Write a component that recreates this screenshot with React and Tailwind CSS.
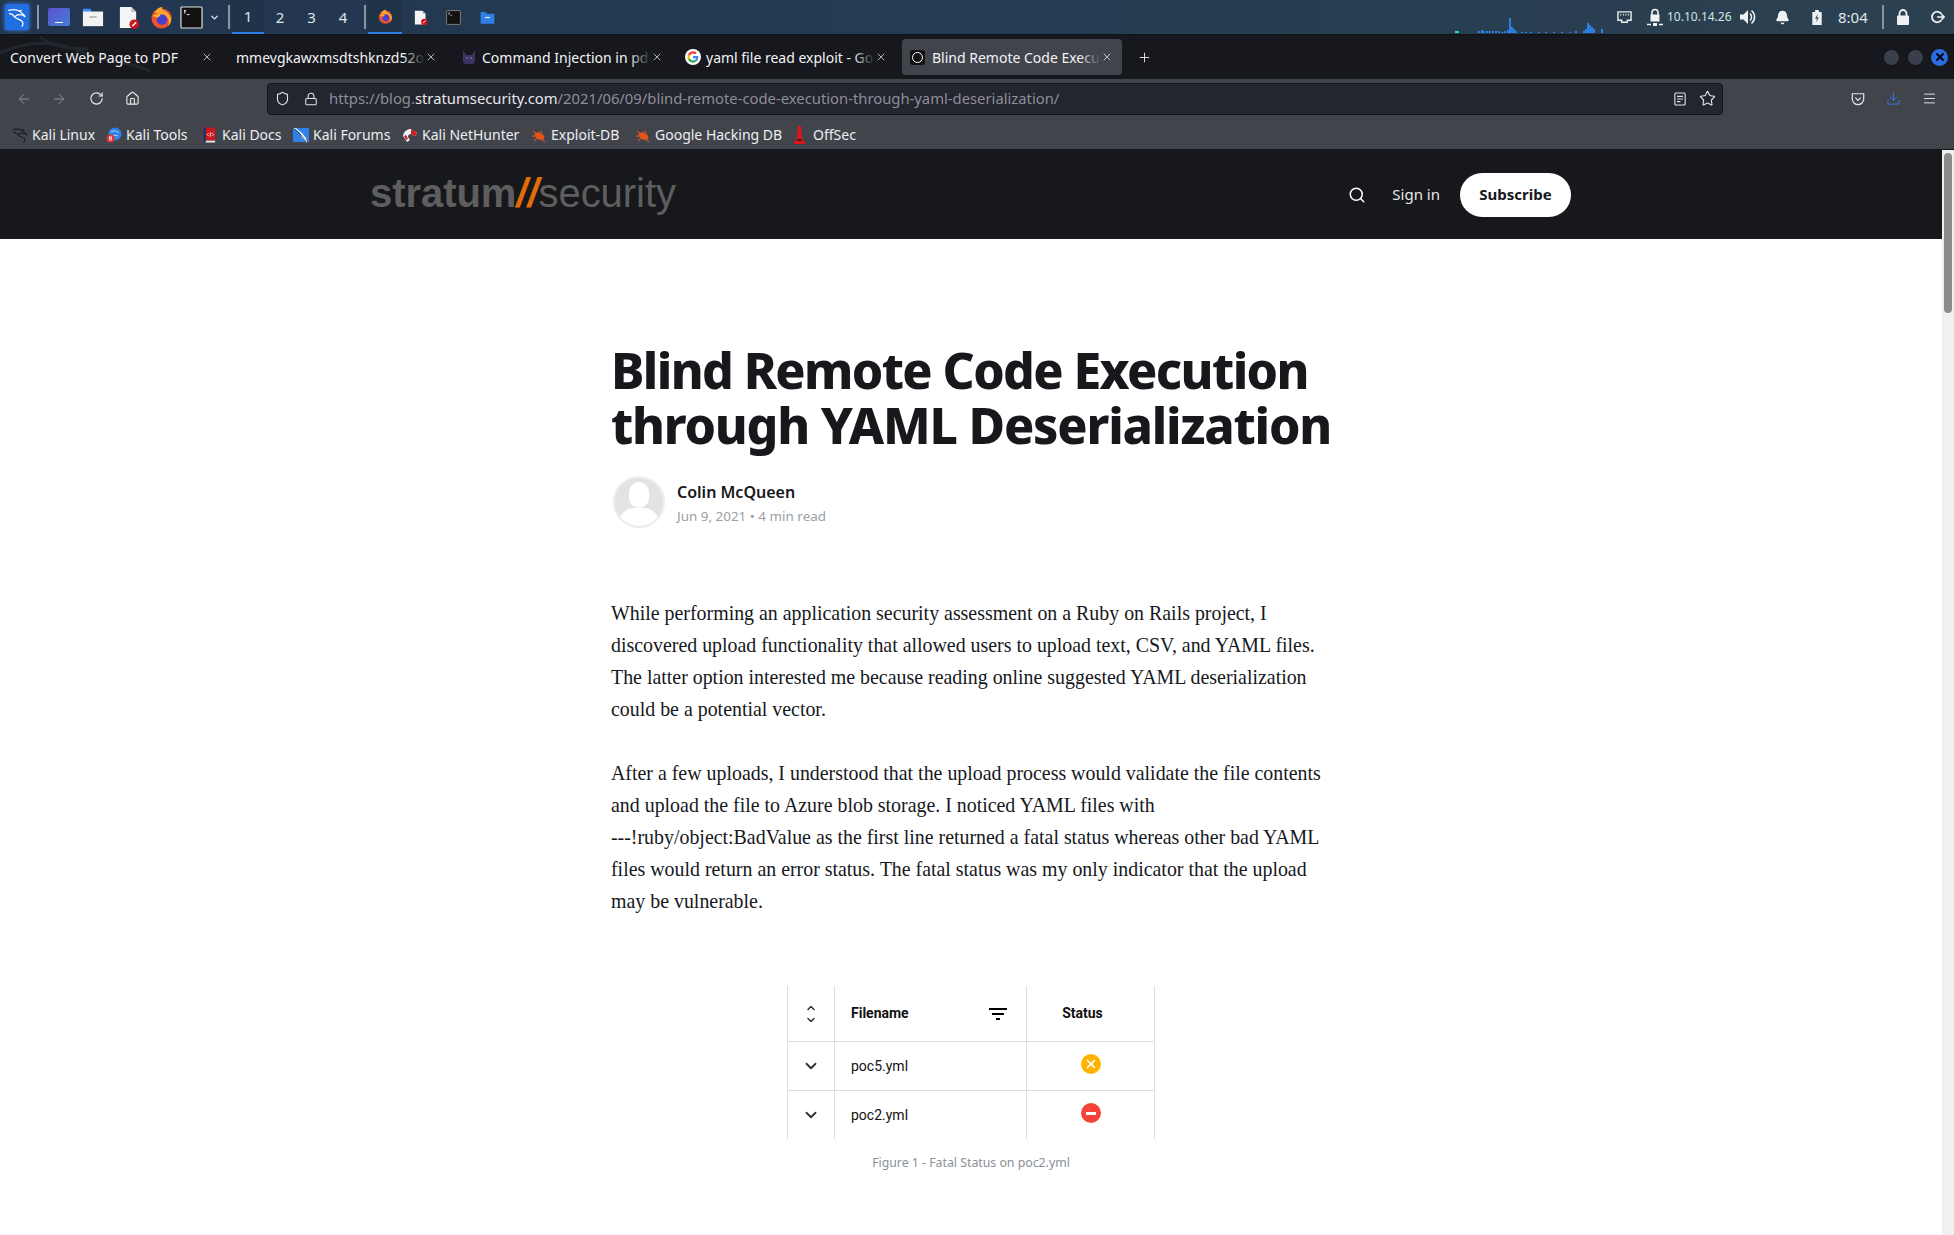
import { ChevronDown, Search, Lock, Shield, ArrowLeft, ArrowRight, RotateCw, Home, Star, Plus, X, Menu, Download, Bell } from "lucide-react";

const chrome = "[font-family:'Noto_Sans',sans-serif]";

function KaliLogo({ className, stroke = "#fff" }) {
  return (
    <svg viewBox="0 0 24 24" className={className} fill="none" stroke={stroke} strokeWidth="1.500" strokeLinecap="round">
      <path d="M2 4c5-1.500 10-1 13 1 3 2 5 3.500 7 7-2-2-4-3-6-3-3 0-6 1-6 3 0 3 8 2 9 7 .3 1.500 0 3-1 4" />
      <path d="M9 12c-1-2-3-4-6-4M15 5l2-1" />
    </svg>
  );
}

function Firefox({ className }) {
  return (
    <svg viewBox="0 0 24 24" className={className}>
      <circle cx="12" cy="13" r="10.500" fill="#f0532c" />
      <path d="M5 6c2-3 5-5 8-5-1 2 0 3 2 4 4 2 6 5 7 8 .5 3-1 6-3 8 2-6-1-11-7-11-2 0-3-1-3-2-2 0-3-1-4-2z" fill="#ffa42c" />
      <circle cx="12.500" cy="14" r="5.500" fill="#4a3fd0" />
      <path d="M3 10c3-2 6-2 8 0l-3 2c-2 0-4-1-5-2z" fill="#ffb52c" />
    </svg>
  );
}

function PdfDoc({ className }) {
  return (
    <svg viewBox="0 0 24 24" className={className}>
      <path d="M3 1h12l5 5v17H3z" fill="#f5f5f5" />
      <path d="M15 1l5 5h-5z" fill="#bbb" />
      <circle cx="18" cy="19" r="5" fill="#d0131c" />
      <path d="M16 21l4-4" stroke="#fff" strokeWidth="1.500" />
    </svg>
  );
}

function Terminal({ className, border = "#e5e5e5" }) {
  return (
    <svg viewBox="0 0 24 24" className={className}>
      <rect x="1" y="1" width="22" height="22" fill="#111" stroke={border} strokeWidth="1.200" rx="1" />
      <path d="M4 5h2.500M5 4v4M7 9h3" stroke="#eee" strokeWidth="1" fill="none" />
    </svg>
  );
}

function FolderIcon({ className, tab = "#3f8cf5", body = "#f2f2f2", slot = "#bbb" }) {
  return (
    <svg viewBox="0 0 24 24" className={className}>
      <path d="M1 7V3h8l2 3z" fill={tab} />
      <rect x="1" y="6" width="22" height="16" fill={body} />
      <rect x="8" y="11" width="8" height="2" fill={slot} />
    </svg>
  );
}

function Google({ className }) {
  return (
    <svg viewBox="0 0 24 24" className={className}>
      <circle cx="12" cy="12" r="12" fill="#fff" />
      <path d="M20 12.300c0-.6-.1-1.200-.2-1.700H12v3.200h4.500c-.2 1-.8 1.900-1.700 2.500l2.700 2.100c1.600-1.500 2.500-3.600 2.500-6.100z" fill="#4285f4" />
      <path d="M12 20.500c2.300 0 4.200-.8 5.500-2.100l-2.700-2.100c-.7.500-1.700.8-2.800.8-2.200 0-4-1.500-4.700-3.500l-2.800 2.200c1.400 2.800 4.300 4.700 7.500 4.700z" fill="#34a853" />
      <path d="M7.300 13.600c-.4-1.100-.4-2.200 0-3.300L4.500 8.100c-1.200 2.300-1.200 5.100 0 7.500z" fill="#fbbc05" />
      <path d="M12 6.900c1.200 0 2.300.4 3.200 1.200l2.400-2.400C16.100 4.300 14.100 3.500 12 3.500c-3.200 0-6.100 1.900-7.500 4.600l2.800 2.200C8 8.400 9.800 6.900 12 6.900z" fill="#ea4335" />
    </svg>
  );
}

function Bug({ className }) {
  return (
    <svg viewBox="0 0 14 14" className={className}>
      <ellipse cx="7.500" cy="8" rx="4.500" ry="3" fill="#e0561a" transform="rotate(30 7.500 8)" />
      <path d="M2 4l3 2M1 8h3M3 12l2-2M9 3l0 2M12 13l-2-2" stroke="#e0561a" strokeWidth="1" />
    </svg>
  );
}

function KaliToolsIcon({ className }) {
  return (
    <svg viewBox="0 0 16 16" className={className}>
      <circle cx="9" cy="7" r="6.500" fill="#2f80e8" />
      <path d="M5 5c3-2 6-1 8 1M6 9c2-1 4-1 6 0" stroke="#bcd8f8" strokeWidth="1" fill="none" />
      <circle cx="4.500" cy="11.500" r="4" fill="#e0342c" />
      <path d="M3 10h3M3.700 10v3.500M5.300 10v3.500" stroke="#fff" strokeWidth=".9" />
    </svg>
  );
}

function KaliDocsIcon({ className }) {
  return (
    <svg viewBox="0 0 16 16" className={className}>
      <rect x="2" y="0" width="12" height="14" fill="#c8161c" />
      <rect x="2" y="0" width="2" height="16" fill="#14306e" />
      <rect x="4" y="14" width="10" height="2" fill="#e8e8e8" />
      <path d="M7 6l-1.500 1.500L7 9M11 6l1.500 1.500L11 9M9.500 5l-1 5" stroke="#fff" strokeWidth=".9" fill="none" />
    </svg>
  );
}

function KaliForumsIcon({ className }) {
  return (
    <svg viewBox="0 0 16 16" className={className}>
      <rect x="0" y="1" width="16" height="14" rx="1" fill="#2f80e8" />
      <path d="M1 1l6 5 2 5 5 5-1-5-4-5-6-5z" fill="#f2f2f2" />
      <path d="M2 2l6 6 5 7" stroke="#222" strokeWidth=".7" fill="none" />
    </svg>
  );
}

function NetHunterIcon({ className }) {
  return (
    <svg viewBox="0 0 16 16" className={className}>
      <path d="M1 9c1-5 4-7 8-7l6 4-2 3-4-2c-2 0-3 1-3 3l2 3-3 2z" fill="#f2f2f2" />
      <path d="M9 2l6 4-2 3-4-2z" fill="#d8161c" />
      <path d="M4 13L2 9l2-1 2 4z" fill="#d8161c" />
    </svg>
  );
}

function OffSecIcon({ className }) {
  return (
    <svg viewBox="0 0 12 18" className={className}>
      <path d="M4.500 0h3l1 12 3 4v2H.5v-2l3-4z" fill="#d8161c" />
      <rect x="4" y="13" width="4" height="2" fill="#222" />
    </svg>
  );
}

function Spark() {
  // cpu graph in the panel
  const bars = [[0, 2, "#2ad4c0"], [2, 2, "#2ad4c0"], [23, 2], [26, 3], [28, 2], [31, 2], [34, 2], [37, 2], [40, 2], [43, 2], [46, 1], [49, 2], [52, 3], [54, 15], [56, 6], [58, 4], [60, 2], [66, 1], [70, 1], [75, 1], [83, 1], [90, 1], [98, 1], [106, 1], [114, 1], [120, 2], [128, 2], [130, 4], [132, 10], [134, 8], [136, 6], [138, 4], [146, 4]];
  return (
    <div className="relative h-[33px] w-[160px] self-start">
      {bars.map(([x, h, c], i) => (
        <span key={i} className="absolute bottom-0 w-[2px]" style={{ left: x, height: h, background: c || "#2a7ee6" }} />
      ))}
    </div>
  );
}

function TopPanel() {
  return (
    <div className={`h-[34px] flex items-center bg-gradient-to-r from-[#22364f] via-[#243c52] to-[#2c4150] text-[#dfe6ec] ${chrome}`}>
      <div className="ml-[5px] w-6 h-[26px] rounded-[2px] bg-[#1f6fe0] shadow-[0_0_4px_#3b82f6] flex items-center justify-center">
        <KaliLogo className="w-5 h-5" />
      </div>
      <div className="ml-[8px] w-[2px] h-[24px] bg-[#8b95a0]" />
      <div className="ml-[9px] w-[22px] h-[18px] rounded-[2px] bg-gradient-to-br from-[#5a4fd0] to-[#3f7fd6] flex items-end justify-center pb-[3px]">
        <span className="w-2 h-[1px] bg-white" />
      </div>
      <FolderIcon className="ml-[12px] w-[22px] h-[22px]" />
      <PdfDoc className="ml-[13px] w-[23px] h-[23px]" />
      <Firefox className="ml-[10px] w-[23px] h-[23px]" />
      <Terminal className="ml-[7px] w-[23px] h-[23px]" />
      <ChevronDown className="ml-[6px] w-[11px] h-[11px] text-[#dfe6ec]" strokeWidth={3} />
      <div className="ml-[8px] w-[2px] h-[24px] bg-[#8b95a0]" />
      <div className="ml-[2px] flex self-stretch text-[15px]">
        <div className="w-[32px] bg-[#1f3349] border-b-2 border-[#2f7fe8] flex items-center justify-center">1</div>
        <div className="w-[32px] flex items-center justify-center">2</div>
        <div className="w-[31px] flex items-center justify-center">3</div>
        <div className="w-[32px] flex items-center justify-center">4</div>
      </div>
      <div className="ml-[5px] w-[2px] h-[24px] bg-[#8b95a0]" />
      <div className="ml-[2px] w-[34px] self-stretch bg-[#1f3349] border-b-2 border-[#2f7fe8] flex items-center justify-center">
        <Firefox className="w-[15px] h-[15px]" />
      </div>
      <PdfDoc className="ml-[11px] w-[15px] h-[15px]" />
      <Terminal className="ml-[18px] w-[15px] h-[15px]" border="#999" />
      <FolderIcon className="ml-[19px] w-[15px] h-[15px]" tab="#2f7fe8" body="#2f7fe8" slot="#dbe8fb" />
      <div className="ml-[960px] self-start">
        <Spark />
      </div>
      <svg viewBox="0 0 16 16" className="ml-[2px] w-[15px] h-[15px]" fill="none" stroke="#e8edf0" strokeWidth="1.500">
        <path d="M1 2h14v9h-4v2H5v-2H1z" />
        <path d="M4 4v2M7 4v2M9.500 4v2M12 4v2" strokeWidth="1" />
      </svg>
      <svg viewBox="0 0 16 18" className="ml-[15px] w-[16px] h-[18px]">
        <path d="M5 7V4.500a3 3 0 0 1 6 0V7" fill="none" stroke="#eef2f4" strokeWidth="1.600" />
        <rect x="3.500" y="6.500" width="9" height="7" fill="#eef2f4" />
        <rect x="6" y="15" width="4" height="3" fill="#eef2f4" />
        <path d="M0 16.500h4M12 16.500h4" stroke="#eef2f4" strokeWidth="1.400" />
      </svg>
      <span className="ml-[4px] text-[12px] text-[#cfe6e0] w-[67px] whitespace-nowrap">10.10.14.26</span>
      <svg viewBox="0 0 18 18" className="ml-[5px] w-[18px] h-[18px]">
        <path d="M1 6.500h3.500L9 2v14l-4.500-4.500H1z" fill="#eef2f4" />
        <path d="M11 5.500a5 5 0 0 1 0 7M12.500 2.500a8.500 8.500 0 0 1 0 13" fill="none" stroke="#eef2f4" strokeWidth="1.600" />
      </svg>
      <Bell className="ml-[18px] w-[15px] h-[15px] text-[#eef2f4] fill-[#eef2f4]" />
      <svg viewBox="0 0 10 16" className="ml-[22px] w-[10px] h-[15px]">
        <path d="M3 0h4v2h3v14H0V2h3z" fill="#eef2f4" />
        <path d="M6 4L3 9h2l-1 4 3-5H5z" fill="#2c4150" />
      </svg>
      <span className="ml-[16px] text-[15px] text-[#dfe6ec] w-[32px]">8:04</span>
      <div className="ml-[12px] w-[2px] h-[24px] bg-[#8b95a0]" />
      <svg viewBox="0 0 14 16" className="ml-[12px] w-[14px] h-[16px]">
        <path d="M3.500 7V4.500a3.500 3.500 0 0 1 7 0V7" fill="none" stroke="#eef2f4" strokeWidth="1.800" />
        <rect x="1" y="6.500" width="12" height="9.500" rx="1" fill="#eef2f4" />
      </svg>
      <svg viewBox="0 0 16 16" className="ml-[21px] w-[14px] h-[14px]" fill="none" stroke="#eef2f4" strokeWidth="2">
        <path d="M12 4.500a6 6 0 1 0 0 7" />
        <path d="M7 8h8M12 5l3 3-3 3" strokeWidth="1.800" />
      </svg>
    </div>
  );
}

function Tab({ width, icon, title, active, fade, closeClass }) {
  return (
    <div className={`relative h-[36px] flex items-center shrink-0 rounded-[4px] ${active ? "bg-[#42444c]" : ""}`} style={{ width }}>
      {icon}
      <span className="overflow-hidden whitespace-nowrap text-[14px] text-[#f2f3f5] flex-1">{title}</span>
      {fade && <span className={`absolute top-0 bottom-0 w-[22px] bg-gradient-to-r from-transparent ${active ? "right-[21px] to-[#42444c]" : "right-[15px] to-[#16181d]"}`} />}
      <X className={`relative w-[12px] h-[12px] text-[#e8e8ea] shrink-0 ${closeClass}`} strokeWidth={1.5} />
    </div>
  );
}

function TabBar() {
  return (
    <div className={`relative h-[45px] bg-[#16181d] border-t border-[#101216] flex items-center overflow-hidden ${chrome}`}>
      <svg viewBox="0 0 170 44" className="absolute left-0 top-0 w-[170px] h-[44px]" fill="none" stroke="#23262c" strokeWidth="3">
        <path d="M0 18c30-14 60-12 84 0 22 10 40 6 66 18" />
        <path d="M40 2c10 8 26 12 48 12" />
      </svg>
      <div className="relative ml-[10px] flex items-center">
        <Tab width={206} title="Convert Web Page to PDF" closeClass="mr-[3px]" />
        <div className="w-[20px]" />
        <Tab width={204} title="mmevgkawxmsdtshknzd52ocdvnj" fade closeClass="mr-[3px]" />
        <div className="w-[21px]" />
        <Tab
          width={205}
          icon={
            <svg viewBox="0 0 16 16" className="w-[16px] h-[16px] mr-[5px] shrink-0">
              <path d="M2 1l3 5h6l3-5v12l-2 2H4l-2-2z" fill="#3a3560" />
              <path d="M5 9h2M9 9h2" stroke="#8a84c0" strokeWidth="1" />
            </svg>
          }
          title="Command Injection in pdf"
          fade
          closeClass="mr-[3px]"
        />
        <div className="w-[19px]" />
        <Tab width={205} icon={<Google className="w-[16px] h-[16px] mr-[5px] shrink-0" />} title="yaml file read exploit - Google" fade closeClass="mr-[3px]" />
        <div className="w-[12px]" />
        <Tab
          width={220}
          active
          icon={<span className="ml-[8px] mr-[7px] w-[15px] h-[15px] rounded-[3px] bg-[#111] flex items-center justify-center shrink-0"><span className="w-[11px] h-[11px] rounded-full border-[1.500px] border-white" /></span>}
          title="Blind Remote Code Execution"
          fade
          closeClass="mr-[9px]"
        />
      </div>
      <Plus className="ml-[15px] w-[15px] h-[15px] text-[#e8e8ea]" strokeWidth={1.5} />
      <div className="ml-auto mr-[6px] flex items-center gap-[7px]">
        <span className="w-[17px] h-[17px] rounded-full bg-[#3a3f4c] border border-[#101216]" />
        <span className="w-[17px] h-[17px] rounded-full bg-[#3a3f4c] border border-[#101216]" />
        <span className="w-[17px] h-[17px] rounded-full bg-[#2a6de0] flex items-center justify-center">
          <X className="w-[12px] h-[12px] text-[#05070d]" strokeWidth={4} />
        </span>
      </div>
    </div>
  );
}

function UrlBar() {
  return (
    <div className="ml-[127px] w-[1456px] h-[32px] rounded-[4px] bg-[#23252f] border border-[#14151a] flex items-center">
      <Shield className="ml-[7px] w-[15px] h-[15px] text-[#e4e4e8]" strokeWidth={1.8} />
      <Lock className="ml-[14px] w-[14px] h-[14px] text-[#e4e4e8]" strokeWidth={1.8} />
      <span className="ml-[11px] text-[14.800px] text-[#8d8f96] whitespace-nowrap">
        https://blog.<span className="text-[#e8e8ea]">stratumsecurity.com</span>/2021/06/09/blind-remote-code-execution-through-yaml-deserialization/
      </span>
      <svg viewBox="0 0 14 16" className="ml-auto w-[12px] h-[14px]" fill="none" stroke="#e4e4e8" strokeWidth="1.300">
        <rect x="1" y="1" width="12" height="14" rx="1.500" />
        <path d="M3.500 5h7M3.500 8h7M3.500 11h4" />
      </svg>
      <Star className="ml-[13px] mr-[6px] w-[17px] h-[17px] text-[#e4e4e8]" strokeWidth={1.6} />
    </div>
  );
}

function Toolbar() {
  return (
    <div className={`h-[39px] bg-[#42444c] flex items-center ${chrome}`}>
      <ArrowLeft className="ml-[16px] w-[16px] h-[16px] text-[#8a8c92]" strokeWidth={1.5} />
      <ArrowRight className="ml-[19px] w-[16px] h-[16px] text-[#8a8c92]" strokeWidth={1.5} />
      <RotateCw className="ml-[22px] w-[15px] h-[15px] text-[#e8e8ea]" strokeWidth={1.8} />
      <Home className="ml-[21px] w-[15px] h-[15px] text-[#e8e8ea]" strokeWidth={1.8} />
      <UrlBar />
      <svg viewBox="0 0 16 16" className="ml-[128px] w-[14px] h-[14px]" fill="none" stroke="#e4e4e8" strokeWidth="1.400">
        <path d="M1.500 2h13v6a6.500 6.500 0 0 1-13 0z" />
        <path d="M5 6.500l3 3 3-3" />
      </svg>
      <Download className="ml-[21px] w-[15px] h-[15px] text-[#2f7fe8]" strokeWidth={1.5} />
      <Menu className="ml-[21px] w-[15px] h-[15px] text-[#e8e8ea]" strokeWidth={1.5} />
    </div>
  );
}

function Bookmark({ icon, label, className }) {
  return (
    <div className={`flex items-center shrink-0 ${className}`}>
      <span className="w-[20px] shrink-0">{icon}</span>
      <span className="text-[14px] text-[#eceef0] whitespace-nowrap">{label}</span>
    </div>
  );
}

function Bookmarks() {
  return (
    <div className={`h-[32px] pl-[12px] pt-[2px] bg-[#42444c] border-b border-[#14151a] flex items-center ${chrome}`}>
      <Bookmark className="w-[94px]" icon={<KaliLogo className="w-[16px] h-[16px]" stroke="#111" />} label="Kali Linux" />
      <Bookmark className="w-[96px]" icon={<KaliToolsIcon className="w-[16px] h-[16px]" />} label="Kali Tools" />
      <Bookmark className="w-[91px]" icon={<KaliDocsIcon className="w-[15px] h-[16px]" />} label="Kali Docs" />
      <Bookmark className="w-[109px]" icon={<KaliForumsIcon className="w-[16px] h-[16px]" />} label="Kali Forums" />
      <Bookmark className="w-[129px]" icon={<NetHunterIcon className="w-[16px] h-[16px]" />} label="Kali NetHunter" />
      <Bookmark className="w-[104px]" icon={<Bug className="w-[16px] h-[16px]" />} label="Exploit-DB" />
      <Bookmark className="w-[158px]" icon={<Bug className="w-[16px] h-[16px]" />} label="Google Hacking DB" />
      <Bookmark icon={<OffSecIcon className="w-[13px] h-[18px]" />} label="OffSec" />
    </div>
  );
}

function SiteHeader() {
  return (
    <header className="h-[89px] bg-[#16181c]">
      <div className="mx-auto w-[1200px] h-full flex items-center">
        <div className="-ml-[1px] text-[40px] text-[#5e5e5e] tracking-[-0.05px] font-['Liberation_Sans',sans-serif] leading-none mb-[4px]">
          <span className="font-bold">stratum</span>
          <span className="font-bold italic text-[#e36c0a]">//</span>
          <span>security</span>
        </div>
        <Search className="ml-auto mr-[-1px] w-[18px] h-[18px] text-white" strokeWidth={2} />
        <span className={`ml-[27px] text-[15px] text-[#e6e8ea] ${chrome}`}>Sign in</span>
        <button className={`ml-[20px] w-[111px] h-[44px] rounded-full bg-white text-[#16181c] text-[15px] font-bold ${chrome}`}>Subscribe</button>
      </div>
    </header>
  );
}

function FigureTable() {
  const rows = [
    { name: "poc5.yml", icon: <span className="w-5 h-5 rounded-full bg-[#ffb300] flex items-center justify-center"><X className="w-[14px] h-[14px] text-white" strokeWidth={3} /></span> },
    { name: "poc2.yml", icon: <span className="w-5 h-5 rounded-full bg-[#f44336] flex items-center justify-center"><span className="w-[10px] h-[3px] bg-white" /></span> },
  ];
  return (
    <div className="ml-[176px] w-[368px] font-['Roboto',sans-serif] text-[14px] text-[#111]">
      <div className="h-[56px] flex border-b border-[#dedede]">
        <div className="w-[48px] border-x border-[#dedede] flex flex-col items-center justify-center">
          <ChevronDown className="w-[14px] h-[12px] rotate-180 text-[#333]" strokeWidth={3} />
          <ChevronDown className="w-[14px] h-[12px] text-[#333]" strokeWidth={3} />
        </div>
        <div className="w-[192px] border-r border-[#dedede] flex items-center pl-[16px] font-bold">
          Filename
          <svg viewBox="0 0 18 12" className="ml-auto mr-[19px] w-[18px] h-[12px]" stroke="#000" strokeWidth="2">
            <path d="M0 1h18M3 6h12M7 11h4" />
          </svg>
        </div>
        <div className="w-[128px] border-r border-[#dedede] flex items-center justify-center font-bold pr-[16px]">Status</div>
      </div>
      {rows.map((r, i) => (
        <div key={r.name} className={`flex ${i === 0 ? "h-[49px] border-b border-[#dedede]" : "h-[48px]"}`}>
          <div className="w-[48px] border-x border-[#dedede] flex items-center justify-center">
            <ChevronDown className="w-[18px] h-[18px] text-[#333]" strokeWidth={2.5} />
          </div>
          <div className="w-[192px] border-r border-[#dedede] flex items-center pl-[16px]">{r.name}</div>
          <div className="w-[128px] border-r border-[#dedede] flex justify-center pt-[12px]">{r.icon}</div>
        </div>
      ))}
    </div>
  );
}

function Article() {
  return (
    <article className="mx-auto w-[720px]">
      <h1 className={`mt-[104px] text-[50px] leading-[55px] font-extrabold whitespace-nowrap text-[#16181c] ${chrome}`}>
        <span className="block tracking-[-1.6px]">Blind Remote Code Execution</span>
        <span className="block tracking-[-1.2px]">through YAML Deserialization</span>
      </h1>
      <div className={`mt-[23px] flex items-center ${chrome}`}>
        <div className="relative ml-[2px] w-[52px] h-[52px] rounded-full bg-[#e3e3e3] overflow-hidden border-2 border-[#eeeeee]">
          <span className="absolute left-[14px] top-[4px] w-[20px] h-[26px] rounded-full bg-white" />
          <span className="absolute left-[4px] top-[30px] w-[40px] h-[30px] rounded-full bg-white" />
        </div>
        <div className="ml-[12px] pt-[3px]">
          <div className="text-[16px] leading-[24px] font-semibold text-[#16181c]">Colin McQueen</div>
          <div className="text-[13.450px] leading-[24px] text-[#9ba0a6]">Jun 9, 2021 • 4 min read</div>
        </div>
      </div>
      <div className="mt-[69px] text-[19.900px] leading-[32px] text-[#16181c] font-['Liberation_Serif',serif]">
        <p>
          While performing an application security assessment on a Ruby on Rails project, I discovered upload functionality that allowed users to upload text, CSV, and YAML files. The latter option interested me because reading online suggested YAML deserialization could be a potential vector.
        </p>
        <p className="mt-[32px]">
          After a few uploads, I understood that the upload process would validate the file contents and upload the file to Azure blob storage. I noticed YAML files with
          <br />
          ---!ruby/object:BadValue as the first line returned a fatal status whereas other bad YAML files would return an error status. The fatal status was my only indicator that the upload may be vulnerable.
        </p>
      </div>
      <figure className="mt-[69px]">
        <FigureTable />
        <figcaption className={`mt-[15px] text-center text-[12.300px] text-[#8a8f96] ${chrome}`}>Figure 1 - Fatal Status on poc2.yml</figcaption>
      </figure>
    </article>
  );
}

export default function App() {
  return (
    <div className="h-[1235px] w-[1954px] overflow-hidden flex flex-col bg-white">
      <TopPanel />
      <TabBar />
      <Toolbar />
      <Bookmarks />
      <div className="flex flex-1 min-h-0">
        <main className="flex-1 min-w-0">
          <SiteHeader />
          <Article />
        </main>
        <div className="w-[12px] bg-[#f0f0f0] flex justify-center pt-[3px]">
          <div className="w-[8px] h-[160px] rounded-full bg-[#8a8c8c]" />
        </div>
      </div>
    </div>
  );
}
